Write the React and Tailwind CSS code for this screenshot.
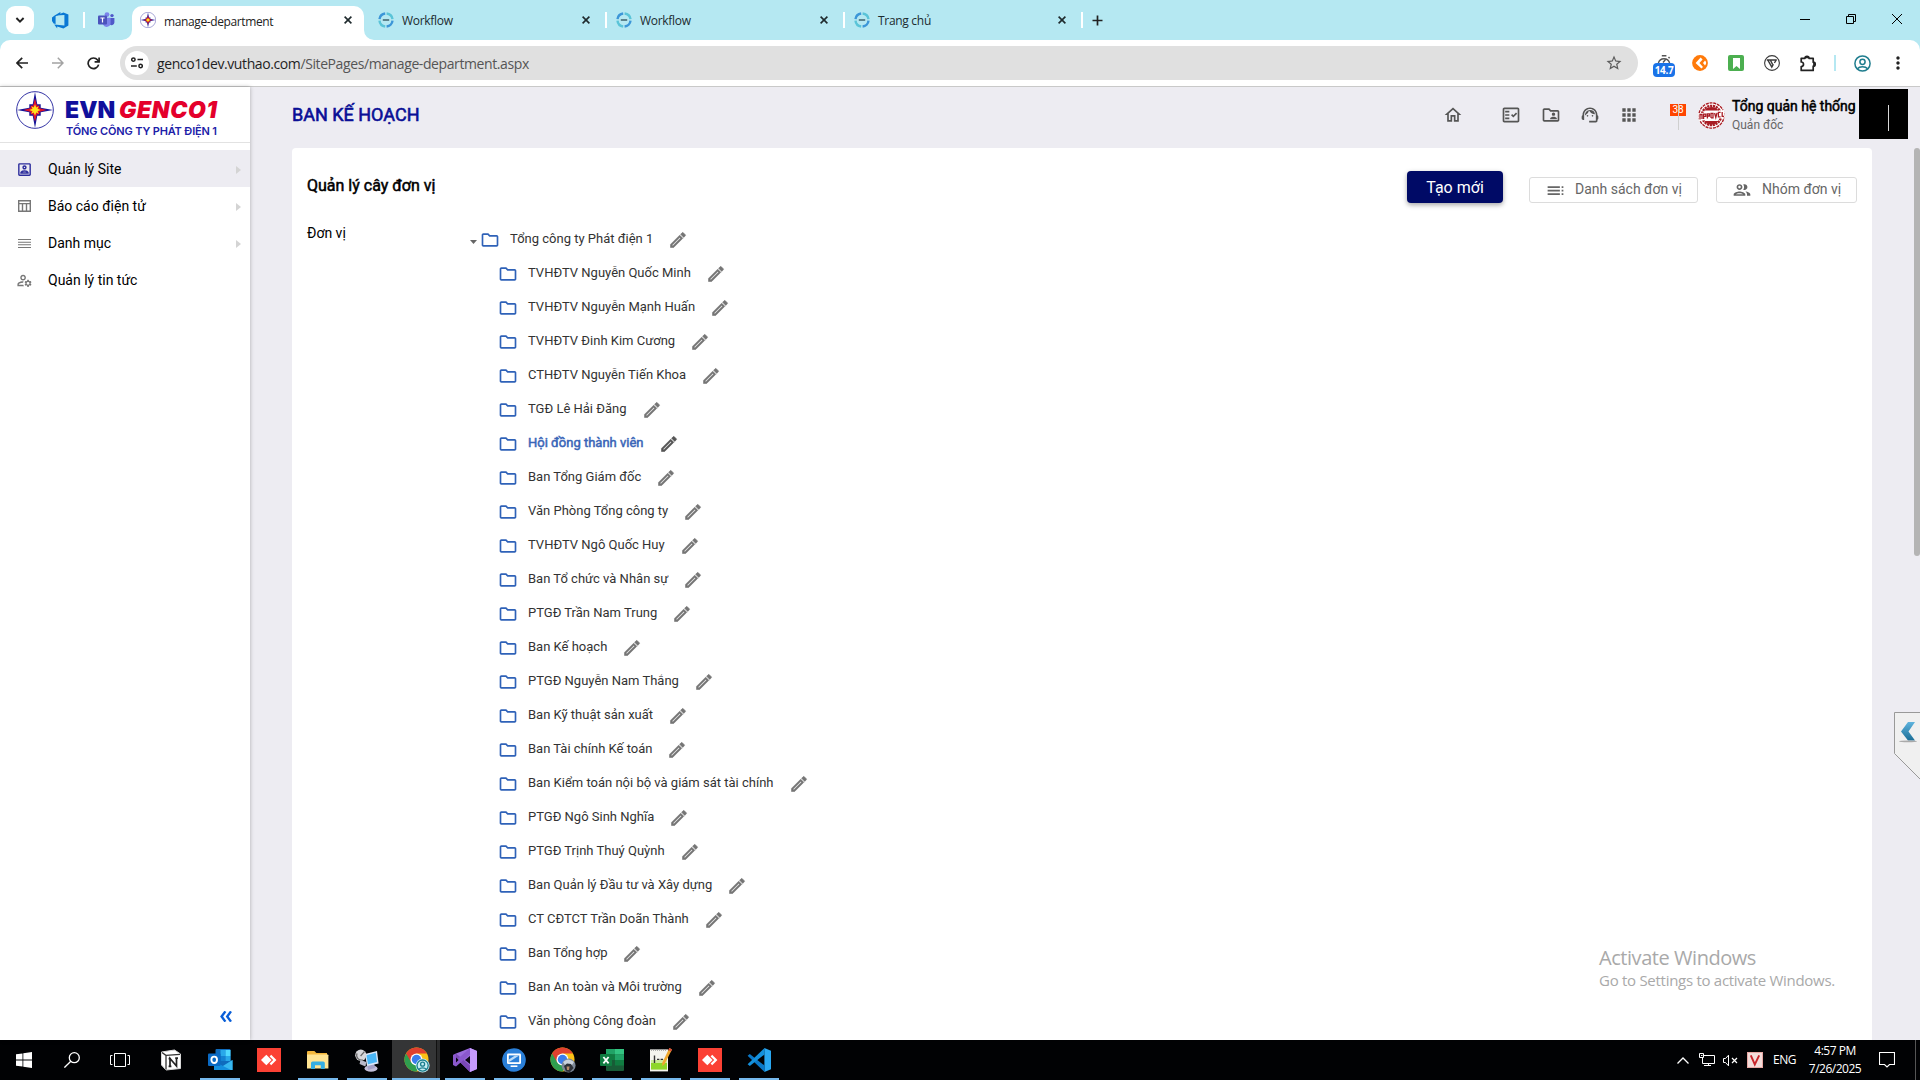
import React from "react";
import {
  MdOutlineHome,
  MdOutlineFactCheck,
  MdOutlineFolderShared,
  MdOutlineSupportAgent,
  MdOutlineApps,
  MdOutlinePortrait,
  MdOutlineManageAccounts,
  MdOutlineFolder,
  MdToc,
  MdOutlineGroup,
  MdStarBorder,
  MdMoreVert,
} from "react-icons/md";

const UI = "font-['Open_Sans','Noto_Sans',sans-serif]";

/* ---------- shared drawings ---------- */

function EvnStar({ size }) {
  return (
    <svg width={size} height={size} viewBox="0 0 40 40" className="shrink-0">
      <circle cx="20" cy="20" r="19.3" fill="#fff" stroke="#2a2aa0" strokeWidth="1" />
      <path d="M20 1 L22.4 14 L26 14 L26 17.6 L39 20 L26 22.4 L26 26 L22.4 26 L20 39 L17.6 26 L14 26 L14 22.4 L1 20 L14 17.6 L14 14 L17.6 14 Z" fill="#14149a" />
      <path d="M20 8 L22.6 17.4 L32 20 L22.6 22.6 L20 32 L17.4 22.6 L8 20 L17.4 17.4 Z" fill="#e0102a" />
      <path d="M15.4 15.4 H24.6 V24.6 H15.4 Z" fill="#e0102a" />
      <path d="M20 14 L21.3 17.4 L24 16 L22.6 18.7 L26 20 L22.6 21.3 L24 24 L21.3 22.6 L20 26 L18.7 22.6 L16 24 L17.4 21.3 L14 20 L17.4 18.7 L16 16 L18.7 17.4 Z" fill="#ffe21a" />
    </svg>
  );
}

function WorkflowIcon() {
  return (
    <svg width="16" height="16" viewBox="0 0 16 16" fill="none" strokeWidth="2.4" className="shrink-0">
      <path d="M1.5 7.2 A6.6 6.6 0 0 1 7.2 1.5" stroke="#3c96d8" />
      <path d="M8.6 1.5 A6.6 6.6 0 0 1 14.5 7.2" stroke="#5ac4d8" />
      <path d="M14.5 8.6 A6.6 6.6 0 0 1 8.6 14.5" stroke="#3c96d8" />
      <path d="M7.2 14.5 A6.6 6.6 0 0 1 1.5 8.6" stroke="#5ac4d8" />
      <path d="M4.8 8 H11.2" stroke="#5b828c" strokeWidth="2" />
    </svg>
  );
}

function CloseX() {
  return (
    <svg width="8" height="8" viewBox="0 0 8 8" stroke="#1f2a2d" strokeWidth="1.6" className="shrink-0">
      <path d="M.6 .6 L7.4 7.4 M7.4 .6 L.6 7.4" />
    </svg>
  );
}

function Pencil({ className }) {
  return (
    <svg width="20" height="20" viewBox="0 0 24 24" fill="currentColor" stroke="currentColor" strokeWidth="0.7" className={className}>
      <path d="M14.06 9.02l.92.92L5.92 19H5v-.92l9.06-9.06M17.66 3c-.25 0-.51.1-.7.29l-1.83 1.83 3.75 3.75 1.83-1.83a.996.996 0 0 0 0-1.41l-2.34-2.34c-.2-.2-.45-.29-.71-.29zm-3.6 3.19L3 17.25V21h3.75L17.81 9.94l-3.75-3.75z" />
    </svg>
  );
}

/* ---------- browser chrome ---------- */

function Tab({ title }) {
  return (
    <div className="flex h-7 w-[238px] shrink-0 items-center pl-[8px]">
      <WorkflowIcon />
      <span className="ml-[8px] w-[180px] pt-[2px] text-[12px] tracking-[-0.3px] text-[#1c2b30]">{title}</span>
      <CloseX />
      <span className="ml-[15px] h-4 w-[2px] shrink-0 bg-white" />
    </div>
  );
}

function TabStrip() {
  return (
    <div className="flex h-10 items-start pt-[6px]">
      <div className="ml-[6px] flex size-7 items-center justify-center rounded-[9px] bg-white">
        <svg width="10" height="6" viewBox="0 0 10 6" fill="none" stroke="#222" strokeWidth="1.9">
          <path d="M1.4 1 L5 4.6 L8.6 1" />
        </svg>
      </div>
      <svg className="mt-[6px] ml-[18px]" width="17" height="17" viewBox="0 0 17 17">
        <path d="M0 5.6 L2.6 3.4 L8.4 0 V2.2 L3.6 4.2 V12 L1.6 11.4 L0 9 Z" fill="#0a78d4" />
        <path d="M4 3.6 L11.4 .4 L16.4 2.4 V13.6 L11.4 16.6 L5.2 14.4 V16.6 L2.2 12.4 L12.4 13.4 V3 Z" fill="#0a78d4" />
      </svg>
      <span className="mt-[6px] ml-[14px] h-4 w-[2px] bg-white" />
      <svg className="mt-[6px] ml-[13px]" width="17" height="16" viewBox="0 0 17 16">
        <circle cx="9" cy="2.6" r="2.4" fill="#7b83eb" />
        <circle cx="14" cy="3.6" r="1.7" fill="#5059c9" />
        <path d="M11.6 6 H16.4 V10.6 A2.6 2.6 0 0 1 11.6 12 Z" fill="#5059c9" />
        <path d="M5 5.8 H12.6 V11 A4 4 0 0 1 5 12.6 Z" fill="#7b83eb" />
        <rect x="0" y="3.6" width="9" height="9" rx="1" fill="#4b53bc" />
        <path d="M2.4 6 H6.6 M4.5 6 V10.6" stroke="#fff" strokeWidth="1.2" />
      </svg>
      <div className="relative ml-[17px] flex h-[34px] w-[232px] shrink-0 items-start rounded-t-[10px] bg-white pt-[6px] pl-2">
        <svg className="absolute bottom-0 -left-[10px]" width="10" height="10" viewBox="0 0 10 10">
          <path d="M10 0 A10 10 0 0 1 0 10 H10 Z" fill="#fff" />
        </svg>
        <svg className="absolute -right-[10px] bottom-0" width="10" height="10" viewBox="0 0 10 10">
          <path d="M0 0 A10 10 0 0 0 10 10 H0 Z" fill="#fff" />
        </svg>
        <EvnStar size={16} />
        <span className="ml-2 w-[180px] pt-px text-[12px] leading-[17px] tracking-[-0.38px] text-[#222]">manage-department</span>
        <span className="mt-1">
          <CloseX />
        </span>
      </div>
      <div className="ml-[6px] flex">
        <Tab title="Workflow" />
        <Tab title="Workflow" />
        <Tab title="Trang chủ" />
      </div>
      <svg className="mt-[9px] ml-[8px]" width="11" height="11" viewBox="0 0 11 11" stroke="#222" strokeWidth="1.7">
        <path d="M5.5 .5 V10.5 M.5 5.5 H10.5" />
      </svg>
      <div className="mt-2 mr-[18px] ml-auto flex items-center gap-9 text-black">
        <svg width="10" height="10" viewBox="0 0 10 10" stroke="currentColor">
          <path d="M0 5.5 H10" />
        </svg>
        <svg width="10" height="10" viewBox="0 0 10 10" fill="none" stroke="currentColor">
          <path d="M.5 2.5 H7.5 V9.5 H.5 Z M2.5 2.5 V.5 H9.5 V7.5 H7.5" />
        </svg>
        <svg width="10" height="10" viewBox="0 0 10 10" stroke="currentColor">
          <path d="M0 0 L10 10 M10 0 L0 10" />
        </svg>
      </div>
    </div>
  );
}

function Toolbar() {
  return (
    <div className="flex h-[46px] items-center rounded-t-[10px] bg-white">
      <svg className="ml-4" width="12" height="12" viewBox="0 0 12 12" fill="none" stroke="#222" strokeWidth="1.7">
        <path d="M12 6 H1.2 M6.2 .8 L1 6 L6.2 11.2" />
      </svg>
      <svg className="ml-6" width="12" height="12" viewBox="0 0 12 12" fill="none" stroke="#a3a3a3" strokeWidth="1.5">
        <path d="M0 6 H10.8 M5.8 .8 L11 6 L5.8 11.2" />
      </svg>
      <svg className="ml-[23px]" width="13" height="13" viewBox="0 0 13 13" fill="none" stroke="#222" strokeWidth="1.7">
        <path d="M11.6 7.6 A5.3 5.3 0 1 1 10.6 3 L12 4.6" />
        <path d="M12.1 .4 V4.9 H7.6" />
      </svg>
      <div className="ml-[20px] flex h-[34px] w-[1518px] shrink-0 items-center rounded-full bg-[#e0e0e0] pl-[5px]">
        <div className="flex size-[24px] items-center justify-center rounded-full bg-white">
          <svg width="12" height="12" viewBox="0 0 12 12" fill="none" stroke="#222" strokeWidth="1.5">
            <circle cx="2.4" cy="2.6" r="1.7" />
            <circle cx="9.6" cy="9" r="1.7" />
            <path d="M6.5 2.6 H12 M0 9 H5.8" />
          </svg>
        </div>
        <span className="ml-2 text-[14px] tracking-[-0.4px] text-[#555]">
          <span className="text-[#1f1f1f]">genco1dev.vuthao.com</span>/SitePages/manage-department.aspx
        </span>
        <MdStarBorder className="mr-[15px] ml-auto text-[18px] text-[#5c5c5c]" />
      </div>
      <div className="flex items-center">
        <div className="mt-[6px] ml-[15px] flex h-[22px] w-[22px] flex-col items-center">
          <svg width="14" height="8" viewBox="0 0 14 8" fill="none" stroke="#555" strokeWidth="1.4" className="shrink-0">
            <path d="M4.8 .8 H9.4 M1.4 8 A5.8 5.8 0 0 1 12.6 8 M6 7.5 L8.5 4.5 M11.5 2 L12.6 3.2" />
          </svg>
          <span className="h-[14px] w-[22px] shrink-0 rounded-[4px] bg-[#1a73e8] text-center text-[10px] leading-[14px] font-bold tracking-[-0.4px] text-white">14.7</span>
        </div>
        <svg className="ml-[17px]" width="16" height="16" viewBox="0 0 16 16">
          <circle cx="8" cy="8" r="7.9" fill="#ff7a0a" />
          <path d="M8.6 2.4 L3.6 8 L9.4 13.6 L11 12 L7.4 8 L10.6 4.4 Z" fill="#fff" />
          <path d="M13 5.6 A3.4 3.4 0 0 1 13 10.4 L11 8 Z" fill="#fff" />
        </svg>
        <div className="ml-5 flex size-4 items-center justify-center rounded-[2px] bg-[#4caf50]">
          <svg width="7" height="11" viewBox="0 0 7 11">
            <path d="M0 0 H7 V11 L3.5 8 L0 11 Z" fill="#fff" />
          </svg>
        </div>
        <svg className="ml-5" width="16" height="16" viewBox="0 0 16 16" fill="none" stroke="#3a3a3a">
          <circle cx="8" cy="8" r="7.4" strokeWidth="1.1" />
          <path d="M2.8 5 H12.8 M4 5.4 L7.8 12 L9.4 9.2 M6.4 5.2 L8.6 9.4 M12 5.4 L10.4 8" strokeWidth="1.4" />
        </svg>
        <svg className="ml-5" width="17" height="17" viewBox="0 0 17 17" fill="none" stroke="#222" strokeWidth="1.7">
          <path d="M1.2 3.3 H5 A2 2 0 0 1 9 3.3 H13.2 V7.2 A2 2 0 0 1 13.2 11.2 V15.4 H1.2 V11.6 A2.3 2.3 0 0 0 1.2 7 Z" strokeLinejoin="round" />
          <path d="M5.6 2.8 A1.5 1.5 0 0 1 8.4 2.8 Z M13.7 7.8 A1.5 1.5 0 0 1 13.7 10.6 Z" fill="#222" strokeWidth="1" />
        </svg>
        <span className="ml-[17px] h-4 w-[2px] bg-[#b5e8f2]" />
        <svg className="ml-[18px]" width="17" height="17" viewBox="0 0 17 17" fill="none" stroke="#1f7d8e" strokeWidth="1.5">
          <circle cx="8.5" cy="8.5" r="7.6" />
          <circle cx="8.5" cy="6.8" r="2.6" />
          <path d="M3.4 13.8 C5.6 11.2 11.4 11.2 13.6 13.8" />
        </svg>
        <MdMoreVert className="ml-[17px] text-[20px] text-[#222]" />
      </div>
    </div>
  );
}

/* ---------- sidebar ---------- */

function TableIcon() {
  return (
    <svg width="13" height="12" viewBox="0 0 13 12" fill="none" stroke="currentColor" strokeWidth="1.4">
      <path d="M.7 .7 H12.3 V11.3 H.7 Z M.7 3.6 H12.3 M4.5 3.6 V11.4 M8.5 3.6 V11.4" />
    </svg>
  );
}
function LinesIcon() {
  return (
    <svg width="13" height="9" viewBox="0 0 13 9" stroke="currentColor" strokeWidth="1.1">
      <path d="M0 .5 H13 M0 3.2 H13 M0 5.8 H13 M0 8.5 H13" />
    </svg>
  );
}

const MENU = [
  { label: "Quản lý Site", icon: <MdOutlinePortrait className="text-[17px]" />, active: true, arrow: true },
  { label: "Báo cáo điện tử", icon: <TableIcon />, arrow: true },
  { label: "Danh mục", icon: <LinesIcon />, arrow: true },
  { label: "Quản lý tin tức", icon: <MdOutlineManageAccounts className="text-[17px]" /> },
];

function Sidebar() {
  return (
    <aside className="z-10 flex w-[250px] shrink-0 flex-col bg-white shadow-[0_0_4px_rgba(0,0,0,0.28)]">
      <div className="flex h-[56px] shrink-0 border-b border-[#e2e2e2]">
        <div className="mt-[4px] ml-[16px]">
          <EvnStar size={38} />
        </div>
        <div className="ml-[11px] flex flex-col font-[Inter,sans-serif] whitespace-nowrap">
          <div className="mt-[13px] flex h-[20px] items-center text-[23px] leading-[20px] font-black">
            <span className="w-[54px] tracking-[0.1px] text-[#10109c]">EVN</span>
            <span className="tracking-[0.6px] text-[#e4002b] italic">GENCO1</span>
          </div>
          <span className="mt-[3px] ml-[1px] text-[11px] leading-[16px] font-semibold tracking-[-0.15px] text-[#2020a8]">TỔNG CÔNG TY PHÁT ĐIỆN 1</span>
        </div>
      </div>
      <nav className="mt-[7px] flex flex-col">
        {MENU.map((m) => (
          <div key={m.label} className={m.active ? "flex h-[37px] items-center bg-[#edecf2]" : "flex h-[37px] items-center"}>
            <span className={m.active ? "ml-[14px] flex w-5 justify-center pt-px text-[#2c2c9c]" : "ml-[14px] flex w-5 justify-center pt-px text-[#777]"}>{m.icon}</span>
            <span className="ml-[14px] pt-[2px] text-[14px] text-black">{m.label}</span>
            {m.arrow && (
              <svg className="mt-[2px] mr-[9px] ml-auto" width="5" height="8" viewBox="0 0 5 8">
                <path d="M0 0 L5 4 L0 8 Z" fill="#d4d4d4" />
              </svg>
            )}
          </div>
        ))}
      </nav>
      <svg className="mt-auto mr-[18px] mb-[18px] ml-auto" width="12" height="11" viewBox="0 0 12 11" fill="none" stroke="#0a5fd8" strokeWidth="2.4">
        <path d="M5.4 .4 L1.6 5.5 L5.4 10.6 M11 .4 L7.2 5.5 L11 10.6" />
      </svg>
    </aside>
  );
}

/* ---------- page ---------- */

function Stamp() {
  return (
    <svg width="27" height="27" viewBox="0 0 27 27">
      <circle cx="13.5" cy="13.5" r="13.5" fill="#fff" />
      <circle cx="13.5" cy="13.5" r="12.6" fill="none" stroke="#a81c24" strokeWidth="1.4" strokeDasharray="3 .8" />
      <circle cx="13.5" cy="13.5" r="9.6" fill="none" stroke="#a81c24" strokeWidth="2.4" strokeDasharray="2.2 .7" />
      <path d="M6.5 8.5 A8.6 8.6 0 0 1 20.5 8.5 Z M6.5 19 A8.6 8.6 0 0 0 20.5 19 Z" fill="#a81c24" />
      <path d="M0 11.5 L26 8 L27 15.5 L1 19 Z" fill="#fff" />
      <path d="M2 17.5 V12.5 H4 V17 M5.6 17 V12.2 H7.8 V14.4 H5.6 M9.4 16.4 V11.8 H11.4 V14 H9.4 M13 16 V11.4 H15 V15.8 H13 M16.6 11 L17.8 15.4 L19 10.8 M22.6 10.4 H20.4 V14.8 H22.6 M24.2 10 V14.4 H26" fill="none" stroke="#a81c24" strokeWidth="1.3" />
    </svg>
  );
}

function Header() {
  return (
    <header className="flex h-[61px] shrink-0 items-start">
      <h1 className="mt-[15px] ml-[42px] text-[18px] leading-[26px] text-[#0a0f96] [-webkit-text-stroke:0.6px_#0a0f96]">BAN KẾ HOẠCH</h1>
      <div className="mt-[18px] mr-[31px] ml-auto flex text-[20px] text-[#555]">
        <MdOutlineHome />
        <MdOutlineFactCheck className="ml-[38px]" />
        <MdOutlineFolderShared className="ml-5" />
        <MdOutlineSupportAgent className="ml-[19px]" />
        <MdOutlineApps className="ml-[19px]" />
      </div>
      <div className="mt-[17px] flex h-[26px] w-4 flex-col items-center">
        <div className="flex h-3 w-4 shrink-0 items-center justify-center bg-[#ff4500] text-[10px] leading-none text-white">38</div>
        <span className="-mt-3 h-[26px] w-px shrink-0 bg-[#cfcfcf]" />
      </div>
      <div className="mt-[15px] ml-[12px]">
        <Stamp />
      </div>
      <div className="mt-[10px] ml-[7px] flex w-[124px] flex-col whitespace-nowrap">
        <span className="text-[14px] leading-[18px] text-black [-webkit-text-stroke:0.5px_#000]">Tổng quản hệ thống</span>
        <span className="mt-[1px] text-[12px] leading-[18px] text-[#666]">Quản đốc</span>
      </div>
      <div className="mt-[2px] mr-3 ml-[3px] h-[50px] w-[49px] bg-black pt-4 pl-[29px]">
        <div className="h-[26px] w-px bg-[#d8d8d8]" />
      </div>
    </header>
  );
}

const DEPARTMENTS = [
  "TVHĐTV Nguyễn Quốc Minh",
  "TVHĐTV Nguyễn Mạnh Huấn",
  "TVHĐTV Đinh Kim Cương",
  "CTHĐTV Nguyễn Tiến Khoa",
  "TGĐ Lê Hải Đăng",
  "Hội đồng thành viên",
  "Ban Tổng Giám đốc",
  "Văn Phòng Tổng công ty",
  "TVHĐTV Ngô Quốc Huy",
  "Ban Tổ chức và Nhân sự",
  "PTGĐ Trần Nam Trung",
  "Ban Kế hoạch",
  "PTGĐ Nguyễn Nam Thắng",
  "Ban Kỹ thuật sản xuất",
  "Ban Tài chính Kế toán",
  "Ban Kiểm toán nội bộ và giám sát tài chính",
  "PTGĐ Ngô Sinh Nghĩa",
  "PTGĐ Trịnh Thuý Quỳnh",
  "Ban Quản lý Đầu tư và Xây dựng",
  "CT CĐTCT Trần Doãn Thành",
  "Ban Tổng hợp",
  "Ban An toàn và Môi trường",
  "Văn phòng Công đoàn",
];
const SELECTED = "Hội đồng thành viên";

function TreeRow({ label }) {
  const on = label === SELECTED;
  return (
    <div className="flex h-[34px] items-center">
      <MdOutlineFolder className="text-[20px] text-[#2f62b8]" />
      <span
        className={
          on
            ? "ml-[10px] pb-[2px] text-[13px] text-[#3a66b8] [-webkit-text-stroke:0.5px_#3a66b8]"
            : "ml-[10px] pb-[2px] text-[13px] text-[#333]"
        }
      >
        {label}
      </span>
      <Pencil className={on ? "ml-[15px] text-[#555]" : "ml-[15px] text-[#757575]"} />
    </div>
  );
}

function Card() {
  return (
    <section className="ml-[42px] flex w-[1580px] shrink-0 flex-col overflow-hidden rounded-t-[4px] bg-white pt-[23px] pl-[15px]">
      <div className="flex h-8 shrink-0 items-end">
        <h2 className="mb-[5px] text-[16px] leading-6 text-black [-webkit-text-stroke:0.5px_#000]">Quản lý cây đơn vị</h2>
        <button className="ml-auto flex h-8 w-24 items-center justify-center rounded-[4px] bg-[#000a66] pt-[2px] text-[16px] text-white shadow-[0_2px_5px_rgba(0,0,0,0.35)]">Tạo mới</button>
        <button className="ml-[26px] flex h-[26px] w-[169px] items-center rounded-[3px] border border-[#dcdcdc] pl-[15px] text-[14px] text-[#666]">
          <MdToc className="mr-[9px] text-[21px]" />
          <span className="pb-[2px]">Danh sách đơn vị</span>
        </button>
        <button className="mr-[15px] ml-[18px] flex h-[26px] w-[141px] items-center rounded-[3px] border border-[#dcdcdc] pl-[15px] text-[14px] text-[#666]">
          <MdOutlineGroup className="mr-[10px] text-[20px]" />
          <span className="pb-[2px]">Nhóm đơn vị</span>
        </button>
      </div>
      <div className="mt-5 flex">
        <span className="w-[163px] text-[14px] leading-5 text-black">Đơn vị</span>
        <div className="flex flex-col">
          <div className="flex items-center">
            <svg className="mt-[3px] mr-[3px]" width="7" height="4" viewBox="0 0 7 4">
              <path d="M0 0 H7 L3.5 4 Z" fill="#666" />
            </svg>
            <TreeRow label="Tổng công ty Phát điện 1" />
          </div>
          <div className="ml-[28px] flex flex-col">
            {DEPARTMENTS.map((d) => (
              <TreeRow key={d} label={d} />
            ))}
          </div>
        </div>
      </div>
    </section>
  );
}

/* ---------- taskbar ---------- */

function ChromeLogo({ children }) {
  return (
    <svg width="26" height="26" viewBox="0 0 26 26">
      <circle cx="12.5" cy="12.5" r="12" fill="#fbc116" />
      <path d="M12.5 12.5 L2.1 6.5 A12 12 0 0 0 12.5 24.5 L17.7 15.5 Z" fill="#2f9e4f" />
      <path d="M12.5 12.5 L7.3 15.5 L2.1 6.5 A12 12 0 0 1 22.9 6.5 H12.5 Z" fill="#e0402f" />
      <circle cx="12.5" cy="12.5" r="6" fill="#fff" />
      <circle cx="12.5" cy="12.5" r="4.7" fill="#3b7ded" />
      {children}
    </svg>
  );
}

const ICONS = {
  notion: (
    <svg width="22" height="22" viewBox="0 0 22 22">
      <path d="M1.5 3 L14.5 1 L20.5 5 V19.5 L6 21 L1.5 16 Z" fill="#fff" stroke="#d8d8d8" strokeLinejoin="round" />
      <path d="M2 3.4 L6 6.4 V20.4 M6 6.4 L20 5.4" fill="none" stroke="#333" strokeWidth="1.3" />
      <path d="M10 17.5 V9.5 L16.5 17 V9 M8.6 9.6 H11 M15.2 9.1 H18 M8.6 17.4 H11.4" fill="none" stroke="#222" strokeWidth="1.7" />
    </svg>
  ),
  outlook: (
    <svg width="25" height="22" viewBox="0 0 25 22">
      <rect x="7.5" y="0" width="15" height="17" rx="1" fill="#0f6cbd" />
      <rect x="12.5" y="1" width="5" height="6" fill="#28a8ea" />
      <rect x="17.5" y="1" width="5" height="6" fill="#50d9ff" />
      <rect x="12.5" y="7" width="5" height="5" fill="#1482d2" />
      <rect x="17.5" y="7" width="5" height="5" fill="#28a8ea" />
      <path d="M6 12 L15 17 L24.5 11 V21 H6 Z" fill="#1490df" />
      <path d="M24.5 11 V21 H23 L12 15.4 L15 17 Z" fill="#38b8f0" />
      <rect x="0" y="4.6" width="12.5" height="12.5" rx="1" fill="#0a6ac4" />
      <ellipse cx="6.2" cy="10.8" rx="2.8" ry="3.2" fill="none" stroke="#fff" strokeWidth="1.9" />
    </svg>
  ),
  anydesk: (
    <svg width="24" height="24" viewBox="0 0 24 24">
      <rect width="24" height="24" fill="#fb4134" />
      <path d="M4 12 L9.3 6.8 L14.6 12 L9.3 17.2 Z" fill="#fff" />
      <path d="M12.6 8.4 L14.2 6.8 L19.4 12 L14.2 17.2 L12.6 15.6 L16.2 12 Z" fill="#fff" />
    </svg>
  ),
  explorer: (
    <svg width="22" height="18" viewBox="0 0 22 18">
      <path d="M0 1 Q0 0 1 0 H7.4 L9.4 2 H20 V4 H0 Z" fill="#f3b73c" />
      <path d="M0 3.4 H20.6 Q21.4 3.4 21.4 4.2 V17.4 H0 Z" fill="#ffe493" />
      <path d="M4 18 V12 Q4 10.4 5.6 10.4 H16.2 Q17.8 10.4 17.8 12 V18 H13.8 V14.2 H8 V18 Z" fill="#35aee2" />
    </svg>
  ),
  remote: (
    <svg width="24" height="23" viewBox="0 0 24 23">
      <ellipse cx="16" cy="19.5" rx="6.5" ry="3.3" fill="#c3bed8" />
      <path d="M12 14 L19 13 L20 19 L13 21 Z" fill="#a3a0c6" />
      <path d="M10 5 L22 2 L23.6 14.4 L12 17 Z" fill="#dbe6f6" />
      <path d="M11.4 6.2 L20.8 3.8 L22 13 L13 15.2 Z" fill="#4ab6f6" />
      <circle cx="5.8" cy="6.2" r="5.6" fill="#d6d6da" />
      <path d="M5.6 7 L9.4 2.6 M2 4.4 A5 5 0 0 0 8 11" stroke="#666" strokeWidth="1.2" fill="none" />
      <path d="M5.4 11 L11.4 13 L10.4 17.6 L4.6 15 Z" fill="#b9b9c9" />
    </svg>
  ),
  chromeUser: (
    <ChromeLogo>
      <circle cx="18.6" cy="18.6" r="7" fill="#c7edf3" />
      <g fill="none" stroke="#197d8d" strokeWidth="1.3">
        <circle cx="18.6" cy="18.6" r="5.6" />
        <circle cx="18.6" cy="17.2" r="2" />
        <path d="M14.8 22.4 C16.4 20.4 20.8 20.4 22.4 22.4" />
      </g>
    </ChromeLogo>
  ),
  vs: (
    <svg width="24" height="24" viewBox="0 0 24 24">
      <path d="M17 0 L24 3 V21 L17 24 L0.5 7.5 L3 5.5 Z" fill="#9a6bdc" />
      <path d="M17 0 L24 3 V21 L17 24 Z" fill="#c79bff" />
      <path d="M0 7 L3 5.5 L17 17.5 V24 L0.5 8 Z" fill="#7a48b8" />
      <path d="M0 7 V17 L3 18.5 L17 6.5 V0 L3 12.5 V6 Z" fill="#8a58cc" />
      <path d="M17 8 V16 L12 12 Z M3 9.5 V14.5 L5.6 12 Z" fill="#0a0612" />
    </svg>
  ),
  ultra: (
    <svg width="24" height="24" viewBox="0 0 24 24">
      <circle cx="12" cy="12" r="11.8" fill="#2a7fd8" />
      <rect x="5" y="5.6" width="14" height="10.4" rx="1.2" fill="#fff" />
      <rect x="6.8" y="7.4" width="10.4" height="6.8" fill="#2a7fd8" />
      <path d="M6.8 14.2 L17.2 7.4 H13 L6.8 11.6 Z" fill="#bcdcf8" />
      <path d="M8.6 17.4 H15.4 V19 H8.6 Z" fill="#fff" />
    </svg>
  ),
  chromePhoto: (
    <ChromeLogo>
      <circle cx="18.6" cy="18.6" r="7" fill="#7c8796" />
      <path d="M13 15 Q18 10 24 15 L22 18 H15 Z" fill="#c9d2dc" />
      <path d="M14 19 L17 16.4 L21 17 L23.6 21 L20 25 L16 24.6 Z" fill="#2d3138" />
      <path d="M16.6 19.5 H19.6 L19 23 H17 Z" fill="#b78c6c" />
    </ChromeLogo>
  ),
  excel: (
    <svg width="24" height="22" viewBox="0 0 24 22">
      <rect x="6" y="0" width="18" height="22" rx="1" fill="#185c37" />
      <rect x="6" y="0" width="9" height="5.5" fill="#21a366" />
      <rect x="15" y="0" width="9" height="5.5" fill="#33c481" />
      <rect x="6" y="5.5" width="9" height="5.5" fill="#107c41" />
      <rect x="15" y="5.5" width="9" height="5.5" fill="#21a366" />
      <rect x="15" y="11" width="9" height="5.5" fill="#107c41" />
      <rect x="0" y="5" width="12" height="12" rx="1" fill="#107c41" />
      <path d="M3.4 8 L8.6 14.4 M8.6 8 L3.4 14.4" stroke="#fff" strokeWidth="1.8" />
    </svg>
  ),
  notepad: (
    <svg width="22" height="24" viewBox="0 0 22 24">
      <rect x="0" y="1.4" width="18" height="22" fill="#f4f4ee" />
      <path d="M1 14 H17 V21.6 H1 Z" fill="#8ed62a" />
      <path d="M1 12 H12 L17 10 V15 H1 Z" fill="#cdeb9a" />
      <path d="M1 2 H17" stroke="#999" strokeWidth="1.4" strokeDasharray="1 1" />
      <path d="M4.5 7.6 V15 M7 11.4 H9.4 M10.6 11.4 H13" stroke="#333" strokeWidth="1.4" />
      <path d="M19.4 0 L22 1.6 L14.6 16 L12 18 L12.4 14.6 Z" fill="#f0a830" />
      <path d="M19.4 0 L22 1.6 L21 3.6 L18.4 2 Z" fill="#d84a3a" />
    </svg>
  ),
  vscode: (
    <svg width="24" height="24" viewBox="0 0 24 24">
      <path d="M17.4 0 L24 2.8 V21.2 L17.4 24 Z" fill="#2aa8f2" />
      <path d="M0.6 7.8 L2.8 6 L17.6 17.6 V24 Z" fill="#0a78c8" />
      <path d="M0.6 16.2 L2.8 18 L17.6 6.4 V0 Z" fill="#1490dc" />
    </svg>
  ),
};

const TASKS = ["vs", "ultra", "chromePhoto", "excel", "notepad", "anydesk", "vscode"];

function TaskItem({ name, running = true }) {
  return (
    <div className="flex h-10 w-10 shrink-0 flex-col items-center">
      <div className="flex h-[38px] items-center pt-[2px]">{ICONS[name]}</div>
      {running && <div className="h-[2px] w-10 bg-[#76b9ed]" />}
    </div>
  );
}

function Taskbar() {
  return (
    <footer className={`${UI} flex h-10 shrink-0 items-center bg-[#010204] text-white`}>
      <svg className="ml-4" width="16" height="16" viewBox="0 0 16 16" fill="#fff">
        <path d="M0 2.3 L6.5 1.4 V7.6 H0 Z M7.3 1.3 L16 0 V7.6 H7.3 Z M0 8.4 H6.5 V14.6 L0 13.7 Z M7.3 8.4 H16 V16 L7.3 14.7 Z" />
      </svg>
      <svg className="ml-8" width="16" height="16" viewBox="0 0 16 16" fill="none" stroke="#fff" strokeWidth="1.3">
        <circle cx="10.3" cy="5.7" r="5" />
        <path d="M6.8 9.2 L.4 15.6" />
      </svg>
      <svg className="ml-[30px]" width="20" height="14" viewBox="0 0 20 14" fill="none" stroke="#fff">
        <path d="M4.5 .5 H15.5 V13.5 H4.5 Z M2.5 2.5 H.5 V11.5 H2.5 M17.5 2.5 H19.5 V11.5 H17.5" />
      </svg>
      <div className="ml-[21px] flex items-center gap-[9px]">
        <TaskItem name="notion" running={false} />
        <TaskItem name="outlook" />
        <TaskItem name="anydesk" running={false} />
        <TaskItem name="explorer" />
        <TaskItem name="remote" />
      </div>
      <div className="ml-[5px] flex h-10 w-12 flex-col bg-[#343536]">
        <div className="flex h-[38px]">
          <div className="flex w-11 items-center justify-center pt-[2px] pl-[5px]">{ICONS.chromeUser}</div>
          <div className="w-1 border-l border-[#111] bg-[#2a2b2c]" />
        </div>
        <div className="h-[2px] w-12 bg-[#76b9ed]" />
      </div>
      <div className="ml-[5px] flex gap-[9px]">
        {TASKS.map((t) => (
          <TaskItem key={t} name={t} />
        ))}
      </div>
      <div className="ml-auto flex items-center">
        <svg width="12" height="7" viewBox="0 0 12 7" fill="none" stroke="#fff" strokeWidth="1.3">
          <path d="M.5 6.5 L6 1 L11.5 6.5" />
        </svg>
        <svg className="ml-[10px]" width="16" height="14" viewBox="0 0 16 14" fill="none" stroke="#fff">
          <path d="M5 2.5 H15.5 V10.5 H3.5 V5 M9.5 10.5 V12.5 M5 12.5 H12 M.5 .5 H4.5 V4.5 H.5 Z M2 2.5 H3.5" />
        </svg>
        <svg className="ml-[8px]" width="15" height="13" viewBox="0 0 15 13" fill="none" stroke="#fff">
          <path d="M.5 4.5 H2.5 L5.5 1.2 V11.8 L2.5 8.5 H.5 Z" />
          <path d="M9 4 L14 9 M14 4 L9 9" strokeWidth="1.2" />
        </svg>
        <svg className="ml-[9px]" width="16" height="16" viewBox="0 0 16 16">
          <rect width="16" height="16" fill="#e8a8a4" />
          <rect x="1" y="1" width="14" height="14" fill="#f3dcda" />
          <path d="M3.8 3.4 L7.8 12.4 L12.2 3.4" fill="none" stroke="#c8242a" strokeWidth="1.9" />
        </svg>
        <span className="ml-[10px] w-[36px] text-[12px] tracking-[-0.5px]">ENG</span>
        <div className="flex w-[52px] flex-col items-center text-[12px] leading-[18px] tracking-[-0.5px] whitespace-nowrap">
          <span>4:57 PM</span>
          <span>7/26/2025</span>
        </div>
        <svg className="ml-[18px]" width="16" height="16" viewBox="0 0 16 16" fill="none" stroke="#fff" strokeWidth="1.1">
          <path d="M.5 .5 H15.5 V12.5 H10.5 L8 15 L5.5 12.5 H.5 Z" />
        </svg>
        <span className="mr-1 ml-5 h-10 w-px bg-[#555]" />
      </div>
    </footer>
  );
}

export default function App() {
  return (
    <div className="flex h-[1080px] w-[1920px] flex-col overflow-hidden font-[Roboto,sans-serif]">
      <div className={`${UI} shrink-0 border-b border-[#c9c9c9] bg-[#b5e8f2]`}>
        <TabStrip />
        <Toolbar />
      </div>
      <div className="relative flex min-h-0 flex-1 bg-[#edecf2]">
        <Sidebar />
        <main className="flex min-w-0 flex-1 flex-col overflow-hidden">
          <Header />
          <div className="flex min-h-0 flex-1">
            <Card />
            <div className="ml-auto h-[408px] w-[6px] rounded-full bg-[#b4b4b4]" />
          </div>
        </main>
        <svg className="absolute top-[625px] right-0" width="26" height="68" viewBox="0 0 26 68">
          <path d="M26 .5 H.5 V41.5 L26 67" fill="#f0f0f0" stroke="#999" />
          <defs>
            <linearGradient id="chev" x1="0" y1="0" x2="0" y2="1">
              <stop offset="0" stopColor="#5fb4de" />
              <stop offset="1" stopColor="#1b6d96" />
            </linearGradient>
          </defs>
          <path d="M14 10 H21 L14.5 19.5 L21 28.5 H14 L7 19.5 Z" fill="url(#chev)" />
          <ellipse cx="14" cy="29.4" rx="9" ry="0.9" fill="#aaa" />
        </svg>
        <div className={`${UI} absolute top-[857px] left-[1599px] flex flex-col whitespace-nowrap text-[#a9a9a9]`}>
          <span className="text-[20px] leading-[28px] tracking-[-0.45px]">Activate Windows</span>
          <span className="text-[15px] leading-[16px] tracking-[-0.28px]">Go to Settings to activate Windows.</span>
        </div>
      </div>
      <Taskbar />
    </div>
  );
}
